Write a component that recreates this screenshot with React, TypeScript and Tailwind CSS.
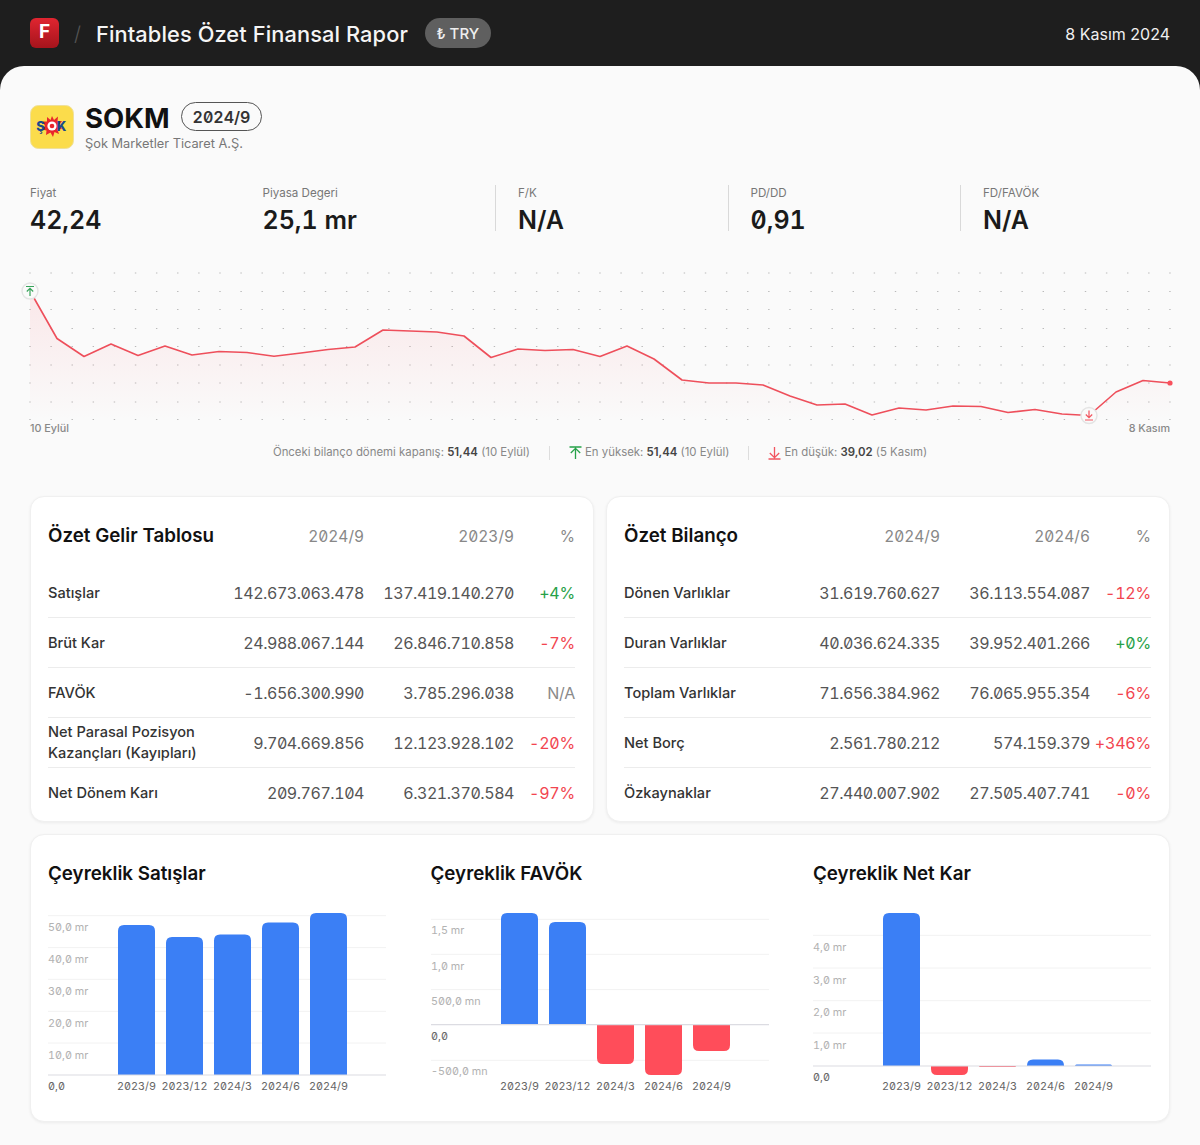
const font = "font-['Inter','Noto_Sans',sans-serif]";

const pricePoints = [
  [30, 291], [57, 338.5], [84, 356.5], [111, 344], [138, 355.5], [165, 346], [192, 355], [219, 351.5],
  [247, 352.5], [274, 356.3], [301, 353], [328, 349.5], [355, 347], [383, 330], [410, 331], [437, 332],
  [464, 336], [491, 357.5], [518, 349], [545, 350.5], [573, 349.5], [600, 356.5], [627, 346], [654, 359],
  [682, 380], [709, 383], [736, 383], [763, 385], [790, 396], [817, 405], [845, 404], [872, 415],
  [899, 408], [926, 410], [953, 406], [981, 406.5], [1008, 412.5], [1035, 409.5], [1062, 414], [1089, 415.5],
  [1116, 392], [1143, 380.5], [1170, 383],
];

function PriceChart() {
  const pts = pricePoints.map(([x, y]) => [x - 30, y - 265]);
  const line = pts.map(([x, y]) => `${x},${y}`).join(" ");
  const area = `0,155 ${line} 1140,155`;
  const dotYs = [8, 26.5, 44.5, 63.5, 81.5, 100, 118, 137, 154.5];
  const dotXs = Array.from({ length: 55 }, (_, i) => i * 21.11);
  return (
    <svg width="1140" height="156" viewBox="0 0 1140 156" className="block overflow-visible">
      <defs>
        <linearGradient id="priceFill" x1="0" y1="0" x2="0" y2="1">
          <stop offset="0" stopColor="#f8505c" stopOpacity="0.11" />
          <stop offset="1" stopColor="#f8505c" stopOpacity="0" />
        </linearGradient>
      </defs>
      {dotYs.map((y) => dotXs.map((x) => <rect key={`${x}-${y}`} x={x - 0.7} y={y - 0.5} width="1.4" height="1" fill="#b9b9b9" />))}
      <polygon points={area} fill="url(#priceFill)" />
      <polyline points={line} fill="none" stroke="#ee4f5b" strokeWidth="1.6" strokeLinejoin="round" />
      <circle cx="1140" cy="118" r="2.6" fill="#f8505c" />
      <circle cx="0" cy="26" r="8" fill="#fafafa" stroke="#e4e4e4" strokeWidth="1.4" />
      <path d="M-4 21.5H4M0 31V23.5M-3.2 26.5L0 23.3L3.2 26.5" fill="none" stroke="#3aa45c" strokeWidth="1.2" />
      <circle cx="1059" cy="150.5" r="8" fill="#fafafa" stroke="#e4e4e4" strokeWidth="1.4" />
      <path d="M1055 155H1063M1059 145.5V152.5M1055.8 149.5L1059 152.7L1062.2 149.5" fill="none" stroke="#f2545f" strokeWidth="1.2" />
    </svg>
  );
}

function ArrowIcon({ up }: { up: boolean }) {
  return (
    <svg width="13" height="14" viewBox="0 0 13 14" className="shrink-0">
      {up ? (
        <path d="M0.5 1H12.5M6.5 13V2.5M1.8 7L6.5 2.3L11.2 7" fill="none" stroke="#26a148" strokeWidth="1.3" />
      ) : (
        <path d="M0.5 13H12.5M6.5 1V11.5M1.8 7L6.5 11.7L11.2 7" fill="none" stroke="#f2545f" strokeWidth="1.3" />
      )}
    </svg>
  );
}

function Stat({ label, value, divided }: { label: string; value: string; divided?: boolean }) {
  return (
    <div className={`w-[232.5px] shrink-0 h-[46px] ${divided ? "border-l border-[#d9d9d9] pl-[22px]" : ""}`}>
      <div className="text-[11.6px] leading-4 text-[#777]">{label}</div>
      <div className="mt-[3px] text-[25px] leading-8 font-semibold text-[#1a1a1a] tabular-nums slashed-zero">{value}</div>
    </div>
  );
}

type Row = { label: React.ReactNode; a: string; b: string; pct: string; tone: "up" | "down" | "na" };

function FinCard({ title, colA, colB, rows }: { title: string; colA: string; colB: string; rows: Row[] }) {
  const tone = { up: "text-[#26a148]", down: "text-[#f2454f]", na: "text-[#8a8a8a]" };
  return (
    <div className="w-[564px] h-[326px] rounded-[14px] bg-white border border-[#f0f0f0] shadow-[0_1px_3px_rgba(0,0,0,0.06)] pl-[17px] pr-[18px]">
      <div className="flex items-center h-[78px] pt-[1px]">
        <div className="flex-1 whitespace-nowrap text-[18.8px] font-semibold text-[#111]">{title}</div>
        <div className="w-[150px] text-right text-[15.5px] text-[#888] tabular-nums slashed-zero">{colA}</div>
        <div className="w-[150px] text-right text-[15.5px] text-[#888] tabular-nums slashed-zero">{colB}</div>
        <div className="w-[61px] text-right text-[15.5px] text-[#888]">%</div>
      </div>
      <div className="mt-[-7px]">
        {rows.map((r, i) => (
          <div key={i} className={`flex items-center h-[50px] ${i < rows.length - 1 ? "border-b border-[#ececec]" : ""}`}>
            <div className="flex-1 whitespace-nowrap pt-[1px] text-[14.6px] leading-[21px] font-medium text-[#333]">{r.label}</div>
            <div className="w-[150px] text-right text-[16px] text-[#555] tabular-nums slashed-zero tracking-[-0.45px]">{r.a}</div>
            <div className="w-[150px] text-right text-[16px] text-[#555] tabular-nums slashed-zero tracking-[-0.45px]">{r.b}</div>
            <div className={`w-[61px] text-right text-[16px] tabular-nums slashed-zero tracking-[-0.2px] ${tone[r.tone]}`}>{r.pct}</div>
          </div>
        ))}
      </div>
    </div>
  );
}

const incomeRows: Row[] = [
  { label: "Satışlar", a: "142.673.063.478", b: "137.419.140.270", pct: "+4%", tone: "up" },
  { label: "Brüt Kar", a: "24.988.067.144", b: "26.846.710.858", pct: "-7%", tone: "down" },
  { label: "FAVÖK", a: "-1.656.300.990", b: "3.785.296.038", pct: "N/A", tone: "na" },
  { label: <>Net Parasal Pozisyon<br />Kazançları (Kayıpları)</>, a: "9.704.669.856", b: "12.123.928.102", pct: "-20%", tone: "down" },
  { label: "Net Dönem Karı", a: "209.767.104", b: "6.321.370.584", pct: "-97%", tone: "down" },
];

const balanceRows: Row[] = [
  { label: "Dönen Varlıklar", a: "31.619.760.627", b: "36.113.554.087", pct: "-12%", tone: "down" },
  { label: "Duran Varlıklar", a: "40.036.624.335", b: "39.952.401.266", pct: "+0%", tone: "up" },
  { label: "Toplam Varlıklar", a: "71.656.384.962", b: "76.065.955.354", pct: "-6%", tone: "down" },
  { label: "Net Borç", a: "2.561.780.212", b: "574.159.379", pct: "+346%", tone: "down" },
  { label: "Özkaynaklar", a: "27.440.007.902", b: "27.505.407.741", pct: "-0%", tone: "down" },
];

const quarters = ["2023/9", "2023/12", "2024/3", "2024/6", "2024/9"];

function barPath(x: number, w: number, from: number, to: number) {
  const h = Math.abs(to - from);
  const r = Math.min(6, h);
  if (to < from) {
    return `M${x} ${from}V${to + r}Q${x} ${to} ${x + r} ${to}H${x + w - r}Q${x + w} ${to} ${x + w} ${to + r}V${from}Z`;
  }
  return `M${x} ${from}V${to - r}Q${x} ${to} ${x + r} ${to}H${x + w - r}Q${x + w} ${to} ${x + w} ${to - r}V${from}Z`;
}

// all y values are page pixels, minus 905 at draw time
function BarChart({ grid, axis, labels, bars, xLabelY }: {
  grid: number[];
  axis: number;
  labels: [string, number][];
  bars: number[];
  xLabelY: number;
}) {
  const top = 905;
  const barX = [70, 118, 166, 214, 262];
  return (
    <svg width="338" height="190" viewBox="0 0 338 190" className="block overflow-visible tabular-nums slashed-zero">
      {grid.map((y) => <line key={y} x1="0" x2="338" y1={y - top} y2={y - top} stroke="#f2f2f2" />)}
      {labels.map(([t, y]) => (
        <text key={t} x="0" y={y - top + 4} fontSize="10.8" fill={t === "0,0" ? "#666" : "#b2b2b2"}>{t}</text>
      ))}
      {bars.map((end, i) => (
        <path key={i} d={barPath(barX[i], 37, axis - top, end - top)} fill={end < axis ? "#3b7ff5" : "#ff4d5a"} />
      ))}
      <line x1="0" x2="338" y1={axis - top} y2={axis - top} stroke="#dcdce2" strokeWidth="1.2" />
      {quarters.map((q, i) => (
        <text key={q + i} x={barX[i] + 18.5} y={xLabelY - top + 4} fontSize="10.8" fill="#666" textAnchor="middle">{q}</text>
      ))}
    </svg>
  );
}

function ChartBlock({ title, children }: { title: string; children: React.ReactNode }) {
  return (
    <div className="w-[338px]">
      <div className="text-[18.8px] font-semibold leading-6 text-[#111]">{title}</div>
      <div className="mt-[19px]">{children}</div>
    </div>
  );
}

function SokLogo() {
  return (
    <svg width="44" height="44" viewBox="0 0 44 44" className="shrink-0">
      <rect x="0.5" y="0.5" width="43" height="43" rx="8" fill="#fbdc4b" stroke="#efe09a" />
      <polygon points="22,11 24,15 28,11.5 27.5,16 32,16 29,20 32,24 27.5,24.5 29,29 24.5,27 23,32 20.5,27.5 16,30 16.5,25.5 12,24.5 15,21 12.5,16.5 17,16.5 17,12 20.5,15" fill="#e8262c" />
      <circle cx="22" cy="21" r="4.6" fill="#fff" />
      <circle cx="22" cy="21" r="2.3" fill="#e8262c" />
      <text x="10.5" y="26" fontSize="13" fontWeight="800" fill="#1c4a8c" textAnchor="middle">Ş</text>
      <text x="31.5" y="26" fontSize="13" fontWeight="800" fill="#1c4a8c" textAnchor="middle">K</text>
    </svg>
  );
}

export default function App() {
  return (
    <div className={`${font} w-[1200px] h-[1145px] overflow-hidden bg-[#1e1e1e]`}>
      <header className="flex items-center h-[66px] px-[30px] pt-[2px]">
        <div className="flex items-center justify-center w-[29px] h-[30px] mt-[-3px] rounded-[6px] bg-gradient-to-b from-[#e02530] to-[#a5141c] text-white text-[19px] font-bold">F</div>
        <div className="ml-[15px] text-[20px] font-light text-[#555]">/</div>
        <div className="ml-[15px] text-[21.8px] font-medium text-[#f5f5f5] tracking-[0.1px]">Fintables Özet Finansal Rapor</div>
        <div className="ml-[17px] flex items-center h-[30px] mt-[-3px] pt-[3px] px-[11.5px] rounded-full bg-[#5f5f5f] text-[15px] font-medium text-[#eee]">₺ TRY</div>
        <div className="ml-auto text-[16px] text-[#f0f0f0]">8 Kasım 2024</div>
      </header>

      <main className="h-[1079px] rounded-t-[24px] bg-[#fafafa] px-[30px] pt-[36px]">
        <div className="flex items-center gap-[11px] h-[50px]">
          <SokLogo />
          <div>
            <div className="flex items-center gap-[11px]">
              <span className="text-[27.5px] leading-8 font-bold text-[#111]">SOKM</span>
              <span className="flex items-center h-[29px] mb-[2px] px-[11px] rounded-full border border-[#555] text-[16px] font-semibold text-[#333] tabular-nums slashed-zero">2024/9</span>
            </div>
            <div className="mt-[1px] text-[12.8px] leading-[18px] text-[#777]">Şok Marketler Ticaret A.Ş.</div>
          </div>
        </div>

        <div className="flex mt-[33px]">
          <Stat label="Fiyat" value="42,24" />
          <Stat label="Piyasa Degeri" value="25,1 mr" />
          <Stat label="F/K" value="N/A" divided />
          <Stat label="PD/DD" value="0,91" divided />
          <Stat label="FD/FAVÖK" value="N/A" divided />
        </div>

        <div className="mt-[34px]">
          <PriceChart />
        </div>
        <div className="flex justify-between text-[10.8px] leading-4 font-medium text-[#888]">
          <span>10 Eylül</span>
          <span>8 Kasım</span>
        </div>

        <div className="flex items-center justify-center mt-[8px] h-[16px] text-[11.4px] text-[#888]">
          <span>Önceki bilanço dönemi kapanış: <b className="font-semibold text-[#444]">51,44</b> (10 Eylül)</span>
          <span className="mx-[19px] h-[14px] w-px bg-[#ddd]" />
          <span className="flex items-center gap-[3px]">
            <ArrowIcon up />
            <span>En yüksek: <b className="font-semibold text-[#444]">51,44</b> (10 Eylül)</span>
          </span>
          <span className="mx-[19px] h-[14px] w-px bg-[#ddd]" />
          <span className="flex items-center gap-[3px]">
            <ArrowIcon up={false} />
            <span>En düşük: <b className="font-semibold text-[#444]">39,02</b> (5 Kasım)</span>
          </span>
        </div>

        <div className="flex gap-[12px] mt-[35px]">
          <FinCard title="Özet Gelir Tablosu" colA="2024/9" colB="2023/9" rows={incomeRows} />
          <FinCard title="Özet Bilanço" colA="2024/9" colB="2024/6" rows={balanceRows} />
        </div>

        <div className="flex gap-[44.5px] mt-[12px] h-[288px] rounded-[14px] bg-white border border-[#f0f0f0] shadow-[0_1px_3px_rgba(0,0,0,0.06)] px-[17px] pt-[27px]">
          <ChartBlock title="Çeyreklik Satışlar">
            <BarChart
              grid={[915.7, 947.6, 979.3, 1011.3, 1043]}
              axis={1075}
              labels={[["50,0 mr", 927], ["40,0 mr", 959], ["30,0 mr", 991], ["20,0 mr", 1023], ["10,0 mr", 1055], ["0,0", 1086]]}
              bars={[925, 937, 934.6, 922.5, 913]}
              xLabelY={1086}
            />
          </ChartBlock>
          <ChartBlock title="Çeyreklik FAVÖK">
            <BarChart
              grid={[919.3, 954.3, 989.6, 1060.3]}
              axis={1024.7}
              labels={[["1,5 mr", 930], ["1,0 mr", 965.6], ["500,0 mn", 1001], ["0,0", 1036], ["-500,0 mn", 1071]]}
              bars={[913, 922, 1064, 1075, 1051]}
              xLabelY={1086}
            />
          </ChartBlock>
          <ChartBlock title="Çeyreklik Net Kar">
            <BarChart
              grid={[935.3, 968, 1000.7, 1033]}
              axis={1066}
              labels={[["4,0 mr", 947], ["3,0 mr", 979.5], ["2,0 mr", 1012], ["1,0 mr", 1045], ["0,0", 1077]]}
              bars={[913, 1075, 1067, 1059.5, 1064.5]}
              xLabelY={1086}
            />
          </ChartBlock>
        </div>
      </main>
    </div>
  );
}
